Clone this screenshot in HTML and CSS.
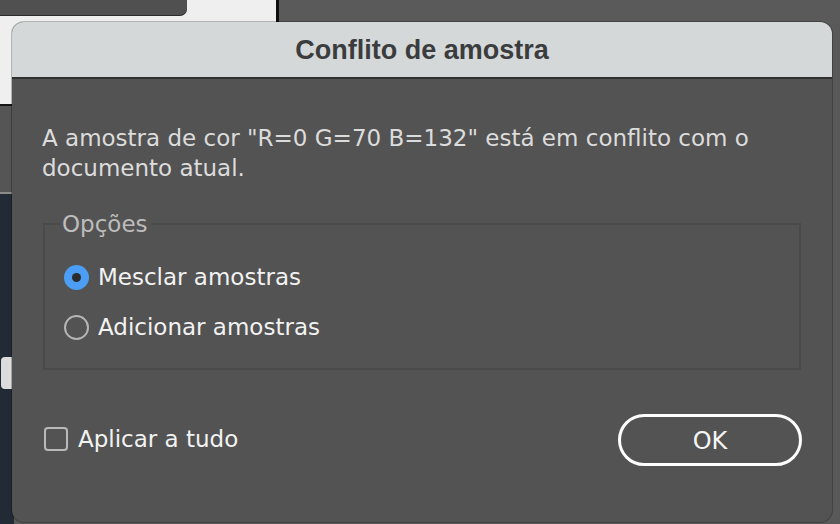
FILE: index.html
```html
<!DOCTYPE html>
<html lang="pt">
<head>
<meta charset="utf-8">
<title>Conflito de amostra</title>
<link rel="stylesheet" href="styles.css">
</head>
<body>
<div class="desktop">
  <div class="bg-light"></div>
  <div class="bg-panel"></div>
  <div class="bg-divider"></div>
  <div class="bg-right"></div>
  <div class="bg-leftgray"></div>
  <div class="bg-navy"></div>
  <div class="bg-tab"></div>

  <div class="dialog">
    <div class="titlebar">Conflito de amostra</div>
    <div class="content">
      <p class="message">A amostra de cor "R=0 G=70 B=132" está em conflito com o documento atual.</p>
      <fieldset class="options">
        <legend>Opções</legend>
        <label class="option"><span class="radio checked"></span>Mesclar amostras</label>
        <label class="option"><span class="radio"></span>Adicionar amostras</label>
      </fieldset>
      <div class="footer">
        <label class="check"><span class="box"></span>Aplicar a tudo</label>
        <button class="ok">OK</button>
      </div>
    </div>
  </div>
</div>
</body>
</html>
```
FILE: styles.css
```css
* { box-sizing: border-box; }
html, body { margin: 0; padding: 0; }
body {
  width: 840px;
  height: 524px;
  overflow: hidden;
  background: #595959;
  font-family: "DejaVu Sans", Verdana, sans-serif;
}
.desktop { position: relative; width: 840px; height: 524px; }

.bg-light { position: absolute; left: 0; top: 0; width: 277px; height: 104px; background: #efefef; }
.bg-panel { position: absolute; left: 0; top: 0; width: 187px; height: 15px; background: #505050; border-bottom-right-radius: 7px; box-shadow: 0 1px 0 #2a2a2a; }
.bg-divider { position: absolute; left: 276px; top: 0; width: 3px; height: 24px; background: #0e0e0e; }
.bg-right { position: absolute; left: 279px; top: 0; right: 0; height: 24px; background: #5a5a5a; }
.bg-leftgray { position: absolute; left: 0; top: 104px; width: 14px; height: 90px; background: #555; border-top: 2px solid #151515; border-bottom: 2px solid #8a8a8a; }
.bg-navy { position: absolute; left: 0; top: 194px; width: 14px; bottom: 0; background: #222a35; }
.bg-tab { position: absolute; left: 1px; top: 357px; width: 14px; height: 32px; background: #dcdcdc; border-radius: 4px 0 0 4px; }

.dialog {
  position: absolute;
  left: 12px;
  top: 22px;
  width: 820px;
  height: 500px;
  border-radius: 12px;
  background: #535353;
  overflow: hidden;
  box-shadow: 0 0 0 1px rgba(0,0,0,0.25);
  display: flex;
  flex-direction: column;
}
.titlebar {
  height: 57px;
  flex: none;
  background: #d5d8d9;
  border-bottom: 2px solid #303030;
  color: #3b3c3d;
  font-family: "Liberation Sans", Arial, sans-serif;
  font-weight: bold;
  font-size: 27px;
  display: flex;
  align-items: center;
  justify-content: center;
  padding-top: 2px;
}
.content {
  padding: 0 30px 0 30px;
  display: flex;
  flex-direction: column;
}
.message {
  margin: 44px 0 0 0;
  font-size: 23px;
  line-height: 30px;
  color: #dcdcdc;
  width: 760px;
}
.options {
  margin: 28px 0 0 1px;
  width: 758px;
  height: 159px;
  border: 2px solid #4a4a4a;
  padding: 19px 0 0 19px;
  min-width: 0;
}
.options legend {
  color: #bdbdbd;
  font-size: 23px;
  padding: 0 3px 0 2px;
  margin-left: -4px;
  line-height: 26px;
}
.option {
  display: flex;
  align-items: center;
  height: 50px;
  color: #f2f2f2;
  font-size: 23px;
  margin-top: -4px;
}
.option + .option { margin-top: 0; }
.radio {
  width: 25px;
  height: 25px;
  border-radius: 50%;
  border: 2px solid #b5b5b5;
  margin-right: 9px;
  flex: none;
  position: relative;
}
.radio.checked {
  border: none;
  background: #4b9ef3;
}
.radio.checked::after {
  content: "";
  position: absolute;
  left: 8px;
  top: 8px;
  width: 9px;
  height: 9px;
  border-radius: 50%;
  background: #2b2b2b;
}
.footer {
  margin-top: 44px;
  display: flex;
  align-items: center;
  justify-content: space-between;
}
.check {
  display: flex;
  align-items: center;
  color: #f2f2f2;
  font-size: 23px;
  margin-top: -3px;
}
.box {
  width: 24px;
  height: 24px;
  border: 2px solid #b9b9b9;
  border-radius: 4px;
  margin: 0 10px 0 2px;
  flex: none;
}
.ok {
  width: 184px;
  height: 52px;
  border: 3px solid #ffffff;
  border-radius: 26px;
  background: transparent;
  color: #f5f5f5;
  font-family: "DejaVu Sans", Verdana, sans-serif;
  font-size: 24px;
  padding: 2px 0 0 0;
  margin-right: 0;
}
```
